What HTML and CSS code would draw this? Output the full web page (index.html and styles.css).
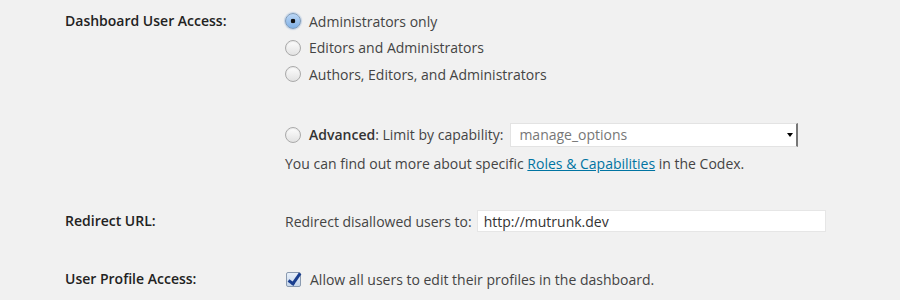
FILE: index.html
```html
<!DOCTYPE html>
<html lang="en">

<head>
    <meta charset="UTF-8">
    <title>Settings</title>
    <link rel="stylesheet" href="styles.css">
</head>

<body>
    <form class="settings">

        <!-- dashboard access -->
        <div class="row row-access">
            <div class="label">Dashboard User Access:</div>
            <div class="field">
                <label class="option"><input type="radio" name="access" checked> Administrators only</label>
                <label class="option"><input type="radio" name="access"> Editors and Administrators</label>
                <label class="option"><input type="radio" name="access"> Authors, Editors, and Administrators</label>

                <label class="option advanced">
                    <input type="radio" name="access">
                    <span class="cap-text"><b>Advanced</b>: Limit by capability:</span>
                    <span class="select">
                        <span class="select-value">manage_options</span>
                        <span class="select-arrow"></span>
                    </span>
                </label>
                <p class="desc">You can find out more about specific <a href="#">Roles &amp; Capabilities</a> in the Codex.</p>
            </div>
        </div>

        <!-- redirect -->
        <div class="row row-redirect">
            <div class="label">Redirect URL:</div>
            <div class="field inline">
                <span>Redirect disallowed users to:</span>
                <input type="text" class="url" value="http://mutrunk.dev">
            </div>
        </div>

        <!-- profile -->
        <div class="row row-profile">
            <div class="label">User Profile Access:</div>
            <div class="field">
                <label class="option"><input type="checkbox" checked> Allow all users to edit their profiles in the dashboard.</label>
            </div>
        </div>
    </form>
</body>

</html>
```

FILE: styles.css
```css
body {
    margin: 0;
    padding: 8px 0 0 65px;
    background: #f1f1f1;
    color: #444;
    font-family: 'Open Sans', sans-serif;
    font-size: 14px;
}

.row {
    display: grid;
    grid-template-columns: 220px 1fr;
}

.label {
    color: #222;
    font-weight: 600;
    line-height: 26.5px;
}

.option {
    display: flex;
    align-items: center;
    height: 26.5px;
}

.advanced {
    margin-top: 34px;
}

.advanced b {
    color: #333;
    font-weight: 600;
}

.desc {
    margin: 2.5px 0 0;
    line-height: 26.5px;
}

a {
    color: #0074a2;
}

/* radios */
input[type="radio"] {
    appearance: none;
    width: 16px;
    height: 16px;
    margin: 0 8px 0 0;
    border: 1px solid #aaa;
    border-radius: 50%;
    background: linear-gradient(#fdfdfd, #e2e2e2);
    box-shadow: inset 0 1px 1px rgba(0, 0, 0, 0.08);
    position: relative;
    flex: none;
}

input[type="radio"]:checked {
    border-color: #7f9bb9;
    background: radial-gradient(circle, #111 0 2px, transparent 2.6px), linear-gradient(#bcd7f5, #7fb0e6);
    box-shadow: 0 0 1px 1px rgba(120, 160, 210, 0.4);
}

.cap-text {
    margin-right: 7px;
}

.select {
    display: flex;
    align-items: center;
    width: 288px;
    height: 24px;
    box-sizing: border-box;
    background: #fff;
    border: 1px solid #e3e3e3;
    border-right: 2px solid #777;
    color: #777;
    padding-left: 8px;
}

.select-value {
    flex: 1;
}

.select-arrow {
    width: 0;
    height: 0;
    border-left: 3px solid transparent;
    border-right: 3px solid transparent;
    border-top: 4px solid #000;
    margin-right: 3px;
}

/* redirect */
.row-redirect {
    margin-top: 32px;
}

.row-redirect .label {
    line-height: 24px;
}

.inline {
    display: flex;
    align-items: center;
    height: 24px;
}

.url {
    width: 349px;
    height: 22px;
    box-sizing: border-box;
    margin-left: 5px;
    padding: 0 6px;
    border: 1px solid #e6e6e6;
    background: #fff;
    color: #333;
    font-family: 'Open Sans', sans-serif;
    font-size: 14px;
    outline: none;
}

/* profile */
.row-profile {
    margin-top: 33px;
}

input[type="checkbox"] {
    appearance: none;
    width: 15px;
    height: 15px;
    margin: 0 9px 0 1px;
    border: 1px solid #8a9ab0;
    border-radius: 2px;
    background: linear-gradient(#e8f0fa, #c6d6ea);
    position: relative;
    flex: none;
}

input[type="checkbox"]:checked::after {
    content: "";
    position: absolute;
    left: 4px;
    top: -2px;
    width: 4px;
    height: 11px;
    border-right: 3px solid #1b3f8f;
    border-bottom: 3px solid #1b3f8f;
    transform: rotate(35deg);
}
```
